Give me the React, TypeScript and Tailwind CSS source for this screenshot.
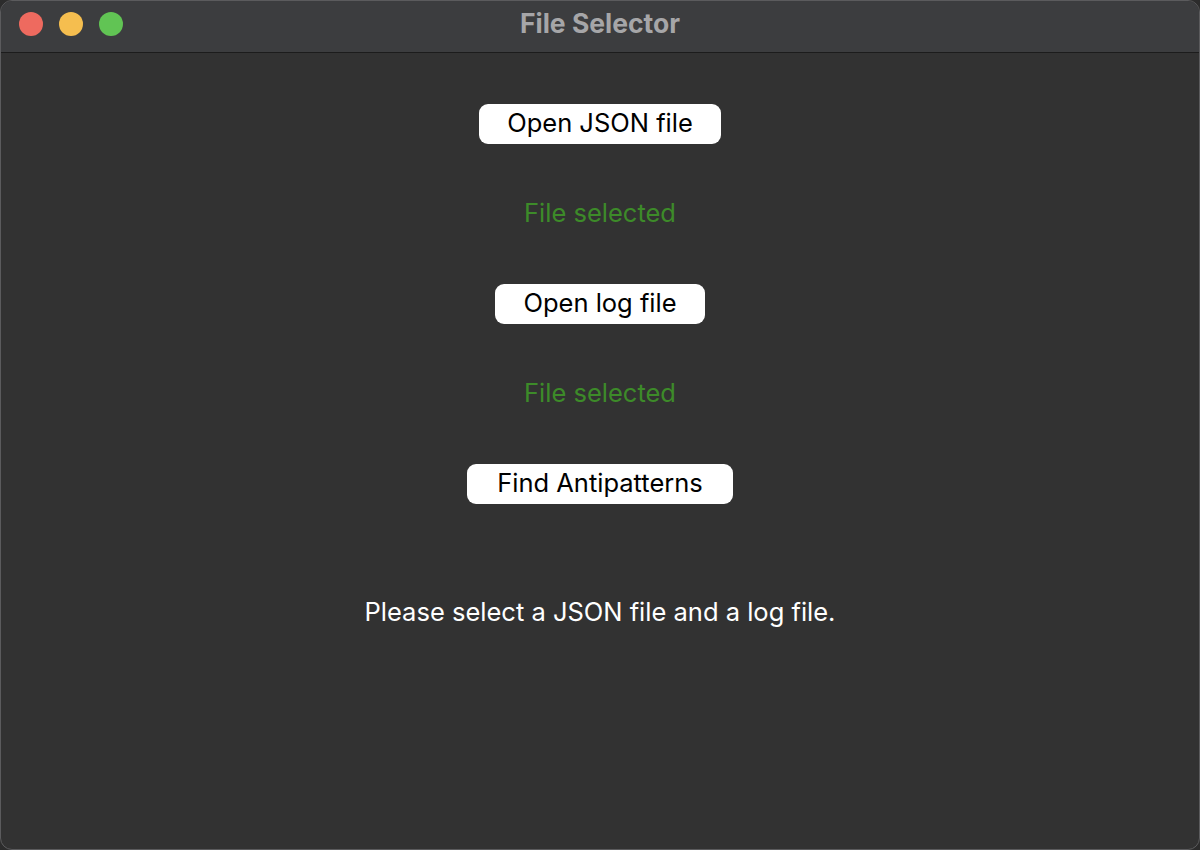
import React from "react";

const font = { fontFamily: "Inter, 'Liberation Sans', sans-serif" };

function MacButton({ label, width }: { label: string; width: string }) {
  return (
    <button
      type="button"
      className={`flex h-10 items-center justify-center rounded-[9px] bg-white pb-[2px] text-[25.5px] text-black ${width}`}
    >
      {label}
    </button>
  );
}

export default function App() {
  return (
    <div className="h-[850px] w-[1200px] bg-[#2c2c2c]" style={font}>
      <div className="flex h-full w-full flex-col overflow-hidden rounded-[12px] border border-[#5b5b5d] bg-[#323232]">
        {/* Title bar */}
        <div className="relative flex h-[52px] shrink-0 items-center justify-center border-b border-[#1c1c1c] bg-[#3c3d3f] pb-[7px]">
          <div className="absolute left-[18px] top-[11px] flex gap-4">
            <span className="h-6 w-6 rounded-full bg-[#ee6a5f]" />
            <span className="h-6 w-6 rounded-full bg-[#f5be4f]" />
            <span className="h-6 w-6 rounded-full bg-[#61c454]" />
          </div>
          <span className="text-[26.5px] font-bold leading-none text-[#a6a6a8]">File Selector</span>
        </div>

        {/* Content */}
        <div className="flex flex-col items-center pt-[26px]">
          <div className="flex h-[90px] items-center">
            <MacButton label="Open JSON file" width="w-[242px]" />
          </div>
          <div className="flex h-[90px] items-center pb-[2px] text-[25.5px] text-[#3d8b29]">File selected</div>
          <div className="flex h-[90px] items-center">
            <MacButton label="Open log file" width="w-[210px]" />
          </div>
          <div className="flex h-[90px] items-center pb-[2px] text-[25.5px] text-[#3d8b29]">File selected</div>
          <div className="flex h-[90px] items-center">
            <MacButton label="Find Antipatterns" width="w-[266px]" />
          </div>
          <div className="mt-[66px] text-[25.5px] leading-[34px] text-white">
            Please select a JSON file and a log file.
          </div>
        </div>
      </div>
    </div>
  );
}
